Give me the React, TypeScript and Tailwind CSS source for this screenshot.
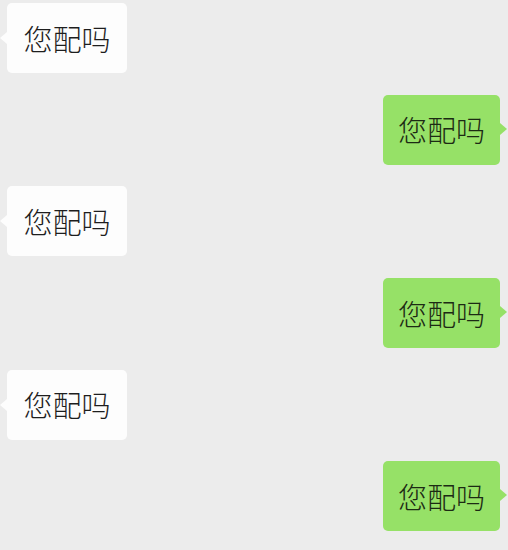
import React from 'react';

type Msg = { id: number; text: string; mine: boolean };

const messages: Msg[] = [
  { id: 1, text: '您配吗', mine: false },
  { id: 2, text: '您配吗', mine: true },
  { id: 3, text: '您配吗', mine: false },
  { id: 4, text: '您配吗', mine: true },
  { id: 5, text: '您配吗', mine: false },
  { id: 6, text: '您配吗', mine: true },
];

const Bubble: React.FC<{ msg: Msg }> = ({ msg }) => {
  if (msg.mine) {
    return (
      <div className="flex justify-end pr-[8px]">
        <div className="relative h-[70px] w-[117px] flex items-center justify-center rounded-[5px] bg-[#96e167] text-[#1c2a14]">
          <span className="text-[29px] leading-none font-light">{msg.text}</span>
          <span className="absolute right-[-7px] top-[28px] w-0 h-0 border-y-[6px] border-y-transparent border-l-[7px] border-l-[#96e167]" />
        </div>
      </div>
    );
  }
  return (
    <div className="flex justify-start pl-[7px]">
      <div className="relative h-[70px] w-[120px] flex items-center justify-center rounded-[5px] bg-[#fdfdfd] text-[#1e1e1e]">
        <span className="text-[29px] leading-none font-light">{msg.text}</span>
        <span className="absolute left-[-7px] top-[29px] w-0 h-0 border-y-[6px] border-y-transparent border-r-[7px] border-r-[#fdfdfd]" />
      </div>
    </div>
  );
};

const App: React.FC = () => {
  return (
    <div
      className="w-[508px] h-[550px] overflow-hidden bg-[#ececec] pt-[3px] flex flex-col gap-[21.7px]"
      style={{ fontFamily: '"Noto Sans CJK SC", "Noto Sans", sans-serif' }}
    >
      {messages.map(m => (
        <Bubble key={m.id} msg={m} />
      ))}
    </div>
  );
};

export default App;
